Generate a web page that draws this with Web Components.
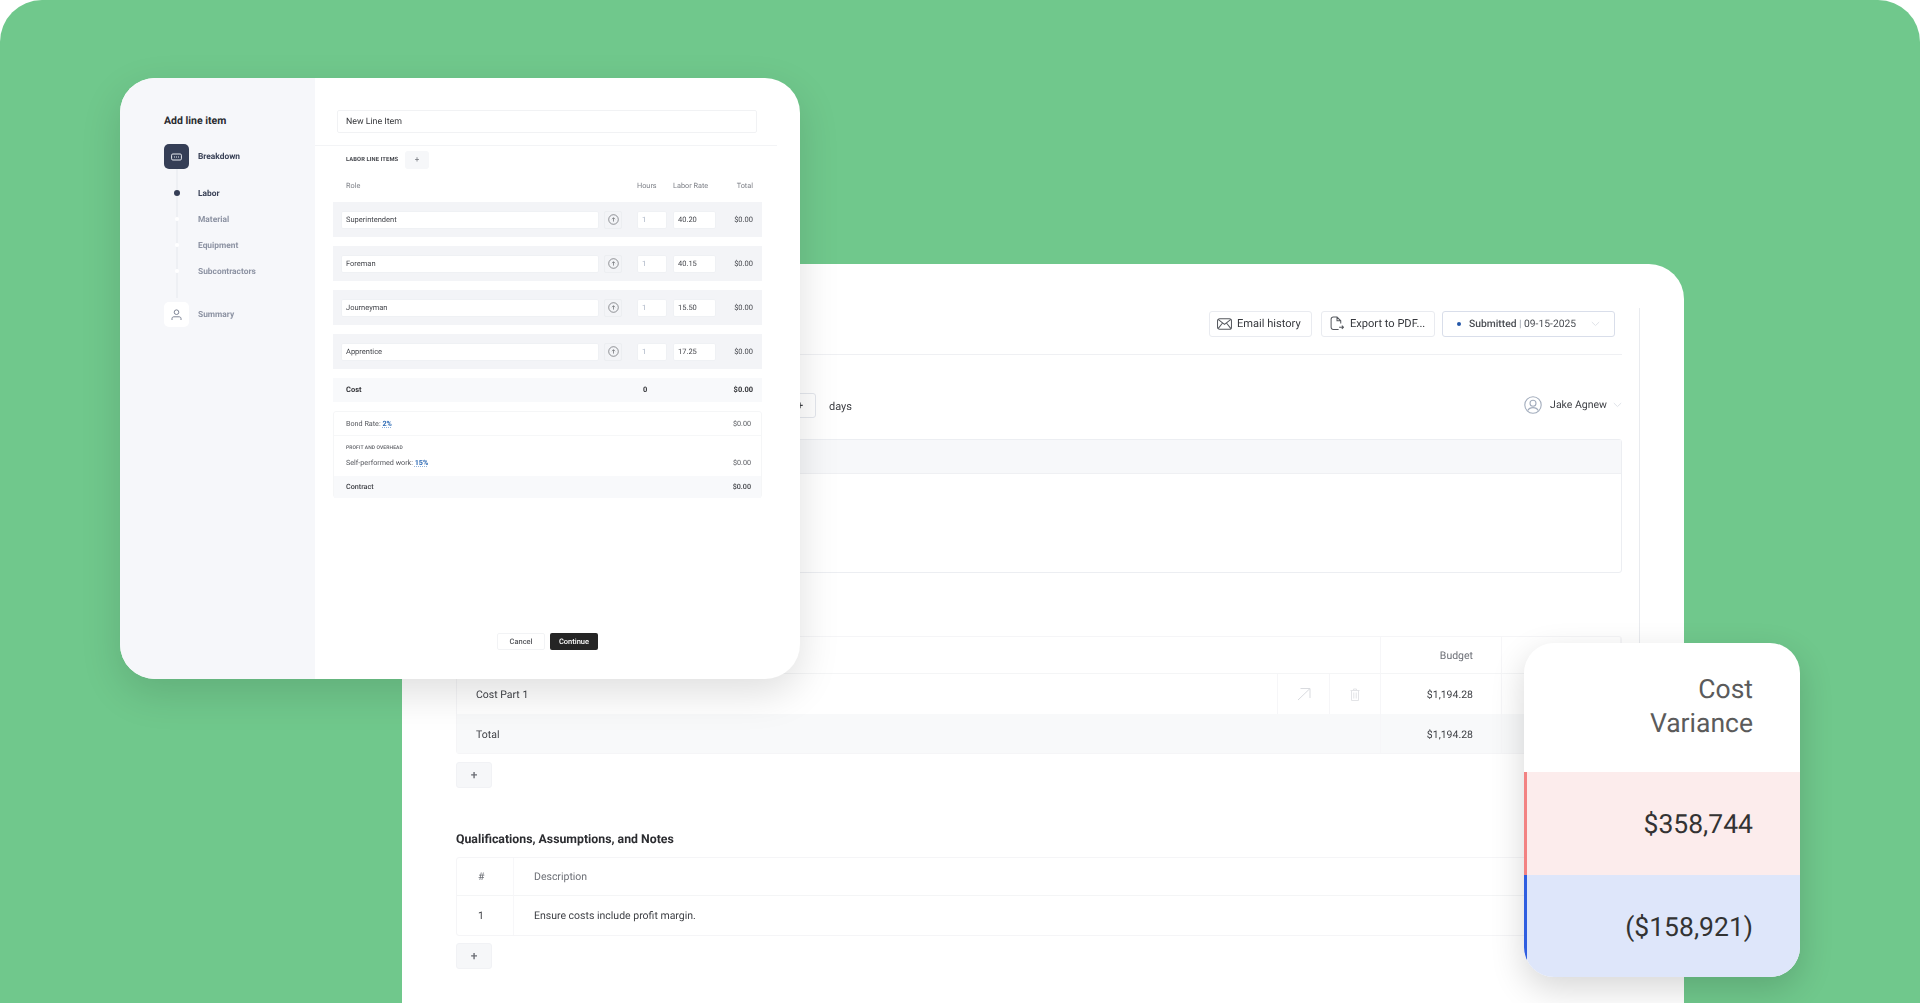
<!doctype html>
<html lang="en"><head><meta charset="utf-8"><title>Line items</title>
<style>
html,body{margin:0;padding:0;background:#fff;height:1003px;overflow:hidden;font-family:Roboto,"Liberation Sans",sans-serif;text-rendering:geometricPrecision}
line-item-modal{box-shadow:0 14px 40px rgba(0,0,0,.13);filter:blur(.3px)}
estimate-sheet{filter:blur(.2px)}
variance-card{box-shadow:0 12px 34px rgba(0,0,0,.16)}
</style></head><body>
<app-stage>
  <estimate-sheet></estimate-sheet>
  <line-item-modal></line-item-modal>
  <variance-card></variance-card>
</app-stage>
<script>
const el=(name,css,html)=>{customElements.define(name,class extends HTMLElement{
  constructor(){super();this.attachShadow({mode:'open'}).innerHTML=`<style>${css}</style>${html}`;}
});};
const chev=`<svg width="9" height="6" viewBox="0 0 9 6" fill="none" stroke="#dfe2e8" stroke-width="1"><path d="M.8 1l3.700 3.600L8.200 1"/></svg>`;

el('app-stage',`:host{display:block;position:relative;width:1920px;height:1003px;background:#70c88c;border-radius:42px 42px 0 0;overflow:hidden}`,`<slot></slot>`);

el('out-btn',`:host{display:flex;align-items:center;gap:5px;height:26px;box-sizing:border-box;border:1px solid #e9ebf0;border-radius:3px;background:#fff;padding:0 0 1px 7px;font:400 11.100px/1 Roboto,sans-serif;color:#36383d;white-space:nowrap}`,`<slot name="icon"></slot><slot></slot>`);
el('add-btn',`:host{display:flex;align-items:center;justify-content:center;width:36px;height:26px;box-sizing:border-box;background:#f6f7f9;border:1px solid #f1f2f5;border-radius:3px;color:#6b6e75;font:500 12px/1 Roboto,sans-serif}`,`+`);

el('estimate-sheet',`
:host{display:flex;position:absolute;left:402px;top:264px;width:1282px;height:739px;box-sizing:border-box;background:#fff;border-radius:35px 35px 0 0;padding:44px 0 0 54px;font-family:Roboto,sans-serif;color:#3d3f44}
.col{width:1166px;flex:none}
.rail{width:1px;height:400px;background:#e9ebef;margin-left:17px}
.bar{display:flex;justify-content:flex-end;padding:3px 7px 17px 0;border-bottom:1px solid #eff0f3}
.bar out-btn+out-btn{margin-left:9px}
.status{display:flex;align-items:center;width:173px;height:26px;box-sizing:border-box;border:1px solid #d9deea;border-radius:3px;margin-left:7px;padding:0 11px 0 14px;font:400 10.300px/1 Roboto,sans-serif;color:#4a4d53}
.dot{width:4px;height:4px;border-radius:50%;background:#2457a8;margin-right:8px}
.status b{font-weight:500}.status i{font-style:normal;color:#9aa0aa;margin:0 2.500px}
.status svg{margin-left:auto;margin-right:3px}
.meta{display:flex;align-items:center;height:25px;margin-top:38px}
.step{width:36px;height:25px;margin-left:324px;box-sizing:border-box;border:1px solid #e4e7ed;border-radius:0 3px 3px 0;display:flex;align-items:center;justify-content:center;padding-left:4px;font:500 11px/1 Roboto,sans-serif}
.days{margin-left:13px;font-size:11px;padding-top:2px}
.user{margin-left:auto;display:flex;align-items:center;gap:8px;font-size:10.500px;padding-bottom:2px}
.user svg:last-child{margin-left:-2px}
.notes{margin-top:21px;height:134px;box-sizing:border-box;border:1px solid #eceef2;border-radius:3px}
.notes div{height:33px;background:#f7f8fa;border-bottom:1px solid #eff0f3}
.tbl{display:grid;box-sizing:border-box;border:1px solid #f5f5f7;border-radius:3px;font-size:10.500px}
.t1{margin-top:63px;grid-template-columns:821px 52px 51px 121px 1fr;grid-template-rows:37px 40px 39px}
.t1>*{display:flex;align-items:center;box-sizing:border-box;border-right:1px solid #f6f6f8}
.t1>.hd{border-bottom:1px solid #f4f5f6;color:#6c6f76}
.t1>.hdw{grid-column:span 3;border-right:1px solid #f6f6f8}
.t1>.wide{grid-column:span 3;background:#f8f9fa;padding-top:2px}
.t1>.tot{background:#f8f9fa;padding-top:2px}
.name{padding-left:19px}.num{justify-content:flex-end;padding-right:28px}.ic{justify-content:center}
h2{margin:44px 0 0;font:700 12.300px/16px Roboto,sans-serif;color:#2b2c30;height:16px}
.t2{margin-top:9px;grid-template-columns:57px 1fr;grid-template-rows:38px 39px}
.t2>*{display:flex;align-items:center;box-sizing:border-box}
.t2>.n{padding-left:21px;border-right:1px solid #f7f7f9}
.t2>.d{padding-left:20px}
.t2>.hd{border-bottom:1px solid #f4f5f6;color:#6c6f76}
`,`
<div class="col">
  <div class="bar">
    <out-btn style="width:103px"><svg slot="icon" width="15" height="12" viewBox="0 0 14 11" fill="none" stroke="#55585e" stroke-width=".95"><rect x=".5" y=".5" width="13" height="10" rx="2"/><path d="M1 1.200l6 4.600 6-4.600M1 9.800l4-5M13 9.800l-4-5"/></svg>Email history</out-btn>
    <out-btn style="width:114px;padding-left:8px;gap:6px"><svg slot="icon" width="14" height="15" viewBox="0 0 13 14" fill="none" stroke="#55585e" stroke-width=".95"><path d="M8 12.500H3A2 2 0 0 1 1 10.500V3a2 2 0 0 1 2-2h3.500L10 4.500v2.500M6.500 1v3.500H10M8.500 10.500H12.500M11 9l1.500 1.500L11 12"/></svg>Export to PDF...</out-btn>
    <div class="status"><span class="dot"></span><b>Submitted</b><i>|</i>09-15-2025${chev}</div>
  </div>
  <div class="meta">
    <div class="step">+</div><span class="days">days</span>
    <div class="user"><svg width="18" height="18" viewBox="0 0 18 18" fill="none" stroke="#a3adbd" stroke-width="1.100"><circle cx="9" cy="9" r="8.200"/><circle cx="9" cy="7.200" r="3"/><path d="M3.800 14.600c1-2.200 3-3 5.200-3s4.200.8 5.200 3"/></svg><span>Jake Agnew</span>${chev}</div>
  </div>
  <div class="notes"><div></div></div>
  <div class="tbl t1">
    <div class="hd hdw"></div><div class="hd num">Budget</div><div class="hd"></div>
    <div class="name">Cost Part 1</div>
    <div class="ic"><svg width="14" height="14" viewBox="0 0 14 14" fill="none" stroke="#d9dbdf" stroke-width="1"><path d="M1 13L13 1.500M3.500 1.500H13V11"/></svg></div>
    <div class="ic"><svg width="10" height="13" viewBox="0 0 10 13" fill="none" stroke="#e3e4e7" stroke-width="1"><path d="M.5 2.500h9M3.500 2.500V1h3v1.500M1.500 2.500v10h7v-10M3.800 4.500v6M6.200 4.500v6"/></svg></div>
    <div class="num">$1,194.28</div><div></div>
    <div class="name wide">Total</div><div class="num tot">$1,194.28</div><div class="tot"></div>
  </div>
  <add-btn style="margin-top:8px"></add-btn>
  <h2>Qualifications, Assumptions, and Notes</h2>
  <div class="tbl t2">
    <div class="n hd">#</div><div class="d hd">Description</div>
    <div class="n">1</div><div class="d">Ensure costs include profit margin.</div>
  </div>
  <add-btn style="margin-top:7px"></add-btn>
</div>
<div class="rail"></div>`);

el('step-head',`:host{display:flex;align-items:center;gap:9px;font:700 8.400px/1 Roboto,sans-serif;color:var(--c,#8d93a3)}
.box{width:25px;height:25px;border-radius:5px;display:flex;align-items:center;justify-content:center;background:var(--b,#fff)}
.tx{padding-top:2px}`,
`<div class="box"><slot name="icon"></slot></div><span class="tx"><slot></slot></span>`);
el('sub-step',`:host{display:flex;align-items:center;gap:9px;height:26px;font:700 8.400px/1 Roboto,sans-serif;color:var(--c,#8d93a3)}
.w{width:25px;display:flex;justify-content:center}.d{width:var(--s,4px);height:var(--s,4px);border-radius:50%;background:var(--d,#fff)}
.tx{padding-top:2px}`,
`<div class="w"><div class="d"></div></div><span class="tx"><slot></slot></span>`);

el('labor-row',`:host{display:grid;grid-template-columns:256px 24px 44px 49px 1fr;align-items:center;height:35px;margin-bottom:9px;padding:0 9px;background:#f3f4f7;width:429px;box-sizing:border-box;font:400 7.500px/1 Roboto,sans-serif;color:#45474d}
.inp{height:16px;background:#fff;border-radius:1px;box-shadow:0 0 0 .5px #ebedf1;display:flex;align-items:center;box-sizing:border-box;padding-left:4px}
.ib{margin-left:6px;width:18px;height:18px;box-sizing:border-box;border:1px solid #eceef1;border-radius:2px;display:flex;align-items:center;justify-content:center}
.h{margin-left:16px;color:#a9b3c4;width:28px}.r{margin-left:8px;width:41px}
.t{text-align:right}
`,`<div class="inp n"><slot></slot></div>
<div class="ib"><svg width="11" height="11" viewBox="0 0 11 11" fill="none" stroke="#5a5c62" stroke-width=".65"><circle cx="5.500" cy="5.500" r="4.800"/><path d="M5.500 7.600V3.800M4 5.200l1.500-1.500L7 5.200"/></svg></div>
<div class="inp h">1</div><div class="inp r"><slot name="rate"></slot></div><div class="t">$0.00</div>`);

el('line-item-modal',`
:host{display:flex;position:absolute;left:120px;top:78px;width:680px;height:601px;background:#fff;border-radius:35px;overflow:hidden;font-family:Roboto,sans-serif}
aside{width:195px;flex:none;background:#f6f7fa;box-sizing:border-box;padding:35px 0 0 44px}
h1{margin:0 0 15px;font:700 10.500px/16px Roboto,sans-serif;color:#2a2b2f}
.subs{height:133px;box-sizing:border-box;padding-top:11px;background:linear-gradient(#eef0f4,#eef0f4) no-repeat 11.500px 0/2px 129px}
main{flex:1;min-width:0}
.top{width:462px;height:68px;box-sizing:border-box;padding:32px 0 0 22px;border-bottom:1px solid #f3f4f6}
.title{width:420px;height:23px;box-sizing:border-box;border:1px solid #f1f2f4;border-radius:2px;display:flex;align-items:center;padding:1px 0 0 8px;font:400 8.800px/1 Roboto,sans-serif;color:#36373b}
.lab{display:flex;align-items:center;gap:5px;height:18px;margin:5px 0 0 31px;font:700 5.800px/1 Roboto,sans-serif;color:#44464c;letter-spacing:.1px}
.lab span{padding-top:2px}
.chip{width:24px;height:18px;background:#f6f7f9;border-radius:3px;display:flex;align-items:center;justify-content:center;font:400 8px/1 Roboto,sans-serif;color:#71747b}
.body{margin-left:18px;width:429px}
.gr{display:grid;grid-template-columns:291px 36px 60px 1fr;padding:0 9px 0 13px;box-sizing:border-box;align-items:center}
.hdr{height:12px;margin:11px 0 10px;font:400 7.300px/1 Roboto,sans-serif;color:#7c7f86}
.hdr span:last-child{text-align:right}
.cost{height:24px;background:#f8f9fb;font:700 7.500px/1 Roboto,sans-serif;color:#35363a}
.cost span:last-child{text-align:right}
.sum{margin-top:9px;height:87px;box-sizing:border-box;border:1px solid #f5f6f7;border-radius:3px;font:400 7.200px/1 Roboto,sans-serif;color:#54565c}
.r{display:flex;justify-content:space-between;align-items:center;padding:0 10px 0 12px}
.r1{height:23px;border-bottom:1px solid #f6f7f8}
.r2{height:40px;display:block;padding:0 10px 0 12px;box-sizing:border-box}
.cap{font:500 5px/1 Roboto,sans-serif;color:#5a5c62;padding-top:10px;letter-spacing:.1px}
.sp{display:flex;justify-content:space-between;margin-top:8px}
.r3{height:22px;background:#f8f9fb;color:#404247;font-weight:500}
a{color:#2e6bb5;font-weight:700;text-decoration:underline dotted #8fb2dc}
.btns{display:flex;justify-content:center;gap:5px;margin-top:135px}
.btns div{width:48px;height:17px;box-sizing:border-box;border-radius:2px;display:flex;align-items:center;justify-content:center;font:500 7.500px/1 Roboto,sans-serif}
.c{border:1px solid #f2f3f5;color:#55575c}.g{background:#252525;color:#fff}
`,`
<aside>
  <h1>Add line item</h1>
  <step-head style="--b:#353e56;--c:#3a4257"><svg slot="icon" width="11" height="8" viewBox="0 0 11 8" fill="none"><rect x=".6" y="1" width="9.800" height="6" rx="1.200" stroke="#e8eaf0" stroke-width="1"/><path d="M3 4h1M5 4h1M7 4h1" stroke="#e8eaf0"/></svg>Breakdown</step-head>
  <div class="subs">
    <sub-step style="--d:#353e56;--s:6px;--c:#3a4257">Labor</sub-step>
    <sub-step>Material</sub-step>
    <sub-step>Equipment</sub-step>
    <sub-step>Subcontractors</sub-step>
  </div>
  <step-head><svg slot="icon" width="11" height="12" viewBox="0 0 11 12" fill="none" stroke="#70778a" stroke-width=".9"><circle cx="5.500" cy="3.200" r="2.300"/><path d="M1 11V9.500c0-1 .8-1.700 1.800-1.700h5.400c1 0 1.800.7 1.800 1.700V11"/></svg>Summary</step-head>
</aside>
<main>
  <div class="top"><div class="title">New Line Item</div></div>
  <div class="lab"><span style="width:54px;white-space:nowrap">LABOR LINE ITEMS</span><div class="chip">+</div></div>
  <div class="body">
    <div class="gr hdr"><span>Role</span><span>Hours</span><span>Labor Rate</span><span>Total</span></div>
    <labor-row>Superintendent<span slot="rate">40.20</span></labor-row>
    <labor-row>Foreman<span slot="rate">40.15</span></labor-row>
    <labor-row>Journeyman<span slot="rate">15.50</span></labor-row>
    <labor-row>Apprentice<span slot="rate">17.25</span></labor-row>
    <div class="gr cost"><span>Cost</span><span style="padding-left:6px">0</span><span></span><span>$0.00</span></div>
    <div class="sum">
      <div class="r r1"><span>Bond Rate: <a>2%</a></span><span>$0.00</span></div>
      <div class="r2"><div class="cap">PROFIT AND OVERHEAD</div><div class="sp"><span>Self-performed work: <a>15%</a></span><span>$0.00</span></div></div>
      <div class="r r3"><span>Contract</span><span>$0.00</span></div>
    </div>
    <div class="btns"><div class="c">Cancel</div><div class="g">Continue</div></div>
  </div>
</main>`);

el('variance-card',`
:host{display:flex;flex-direction:column;position:absolute;left:1524px;top:643px;width:276px;height:334px;border-radius:30px;overflow:hidden;background:#fff;font:400 26.500px/1 Roboto,sans-serif;color:#333;text-align:right}
.h{height:129px;box-sizing:border-box;padding:30px 47px 0 0;line-height:34px;color:#5b5b5b;flex:none}
.v{display:flex;align-items:center;justify-content:flex-end;box-sizing:border-box;padding:4px 47px 0 0;border-left:3px solid}
.red{height:103px;background:#fcecec;border-color:#f28282}
.blue{height:102px;background:#dee6fa;border-color:#2f5ee0}
`,`<div class="h">Cost<br>Variance</div><div class="v red">$358,744</div><div class="v blue">($158,921)</div>`);
</script>
</body></html>
